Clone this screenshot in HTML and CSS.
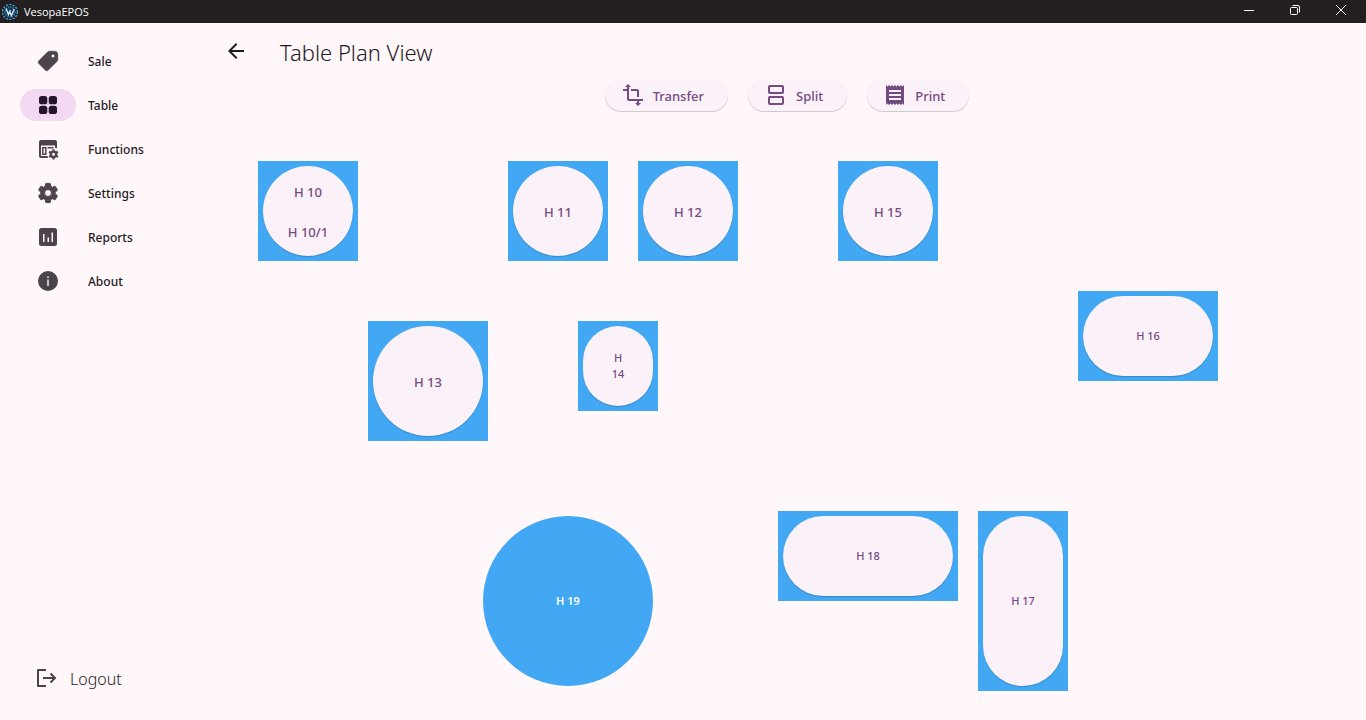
FILE: index.html
```html
<!DOCTYPE html>
<html lang="en">
<head>
<meta charset="utf-8">
<meta name="viewport" content="width=device-width, initial-scale=1">
<title>VesopaEPOS</title>
<link rel="stylesheet" href="styles.css">
</head>
<body>
<header class="titlebar">
  <svg class="logo" viewBox="0 0 18 18" aria-hidden="true">
    <circle cx="9" cy="9" r="7.4" fill="none" stroke="#3fa9dc" stroke-width="1.300" stroke-dasharray="2 1.400"/>
    <circle cx="9" cy="9" r="5" fill="#123a5c" stroke="#2583bd" stroke-width="1.600" stroke-dasharray="1.300 1"/>
    <path d="M5 5.500l2.500 6L9.300 7M8.500 8l1.800 4.500 3-6.500" fill="none" stroke="#e4f6ff" stroke-width="1.300"/>
  </svg>
  <span class="app-name">VesopaEPOS</span>
  <div class="window-controls">
    <button class="window-button" aria-label="Minimize"><svg viewBox="0 0 12 12"><path d="M1 6.500h10"/></svg></button>
    <button class="window-button" aria-label="Restore"><svg viewBox="0 0 12 12"><rect x="1.500" y="3.500" width="7" height="7" rx="1"/><path d="M3.500 1.500H9A1.500 1.500 0 0 1 10.500 3V8.500"/></svg></button>
    <button class="window-button" aria-label="Close"><svg viewBox="0 0 12 12"><path d="M1 1l10 10M11 1L1 11"/></svg></button>
  </div>
</header>
<div class="shell">
  <nav class="sidebar">
    <ul class="nav-list">
      <li><a class="nav-item" href="#sale"><span class="indicator"><svg class="icon" viewBox="0 0 24 24"><path stroke="currentColor" stroke-width=".6" stroke-linejoin="round" transform="matrix(-1 0 0 1 24 0)" d="M21.200 11.800 12.200 2.800C11.800 2.400 11.200 2.200 10.700 2.200H5.200C3.500 2.200 2.200 3.500 2.200 5.200V10.700C2.200 11.200 2.400 11.800 2.800 12.200L11.800 21.200C12.600 22 13.800 22 14.600 21.200L21.200 14.600C22 13.800 22 12.600 21.200 11.800zM7 8.700C6 8.700 5.300 8 5.300 7S6 5.300 7 5.300 8.700 6 8.700 7 8 8.700 7 8.700z"/></svg></span><span class="label">Sale</span></a></li>
      <li><a class="nav-item selected" href="#table" aria-current="page"><span class="indicator"><svg class="icon" viewBox="0 0 24 24"><rect x="3" y="3" width="8.300" height="8.300" rx="2.600"/><rect x="12.700" y="3" width="8.300" height="8.300" rx="2.600"/><rect x="3" y="12.700" width="8.300" height="8.300" rx="2.600"/><rect x="12.700" y="12.700" width="8.300" height="8.300" rx="2.600"/></svg></span><span class="label">Table</span></a></li>
      <li><a class="nav-item" href="#functions"><span class="indicator"><svg class="icon" viewBox="0 0 24 24"><path fill-rule="evenodd" d="M5 3h14a2 2 0 0 1 2 2v6.500a6.500 6.500 0 0 0-2-.8V8.500H5V19h6.500a6.500 6.500 0 0 0 .8 2H5a2 2 0 0 1-2-2V5a2 2 0 0 1 2-2z"/><path fill="none" stroke="currentColor" stroke-width="1.500" d="M6.800 10.800h3v6.500h-3zM11.500 10.800h6"/><circle cx="17.500" cy="17.300" r="2.700" fill="none" stroke="currentColor" stroke-width="2.400"/><path fill="none" stroke="currentColor" stroke-width="2.200" d="M17.500 14.600v-2.400M17.500 20v2.400M15.160 15.950l-2.080-1.200M19.840 18.650l2.080 1.200M15.160 18.650l-2.080 1.200M19.840 15.950l2.080-1.200"/></svg></span><span class="label">Functions</span></a></li>
      <li><a class="nav-item" href="#settings"><span class="indicator"><svg class="icon" viewBox="0 0 24 24"><path fill-rule="evenodd" stroke="currentColor" stroke-width="1" stroke-linejoin="round" d="M19.140 12.940c.04-.3.06-.61.06-.94s-.02-.64-.07-.94l2.030-1.580a.49.49 0 0 0 .12-.61l-1.920-3.320a.49.49 0 0 0-.59-.22l-2.390.96a7 7 0 0 0-1.620-.94l-.36-2.540A.48.48 0 0 0 13.920 2.400h-3.840a.47.47 0 0 0-.47.41l-.36 2.540c-.59.24-1.130.57-1.620.94l-2.390-.96a.48.48 0 0 0-.59.22L2.740 8.870a.47.47 0 0 0 .12.61l2.030 1.580c-.05.3-.09.63-.09.94s.02.64.07.94l-2.030 1.580a.49.49 0 0 0-.12.61l1.920 3.320c.12.22.37.29.59.22l2.390-.96c.5.38 1.030.7 1.620.94l.36 2.540c.05.24.24.41.48.41h3.840c.24 0 .44-.17.47-.41l.36-2.540a7 7 0 0 0 1.620-.94l2.390.96c.22.08.47 0 .59-.22l1.920-3.320a.47.47 0 0 0-.12-.61zM12 15.500a3.500 3.500 0 1 1 0-7 3.500 3.500 0 0 1 0 7z"/></svg></span><span class="label">Settings</span></a></li>
      <li><a class="nav-item" href="#reports"><span class="indicator"><svg class="icon" viewBox="0 0 24 24"><path d="M18.500 3h-13A2.500 2.500 0 0 0 3 5.500v13A2.500 2.500 0 0 0 5.500 21h13a2.500 2.500 0 0 0 2.500-2.500v-13A2.500 2.500 0 0 0 18.500 3zM8.500 17H7V9h1.500zm4.500 0h-1.500v-4.500H13zm4 0h-1.500V7.500H17z"/></svg></span><span class="label">Reports</span></a></li>
      <li><a class="nav-item" href="#about"><span class="indicator"><svg class="icon" viewBox="0 0 24 24"><path d="M12 2a10 10 0 1 0 0 20 10 10 0 0 0 0-20zm.7 15h-1.400v-6.500h1.400zm0-8h-1.400V7.400h1.400z"/></svg></span><span class="label">About</span></a></li>
    </ul>
    <a class="logout" href="#logout"><svg class="icon" viewBox="0 0 24 24"><path fill="none" stroke="currentColor" stroke-width="2" stroke-linejoin="round" d="M12 4H4v16h8"/><path fill="none" stroke="currentColor" stroke-width="2" d="M9 12h12M16.500 7.500 21 12l-4.500 4.500"/></svg><span class="label">Logout</span></a>
  </nav>
  <main class="content">
    <div class="appbar">
      <button class="back" aria-label="Back"><svg class="icon" viewBox="0 0 24 24"><path d="M20 11H7.830l5.590-5.590L12 4l-8 8 8 8 1.410-1.410L7.830 13H20z"/></svg></button>
      <h1 class="title">Table Plan View</h1>
    </div>
    <div class="actions">
      <button class="action"><svg class="icon" viewBox="0 0 24 24"><path d="M22 18v-2H8V4h2L7 1 4 4h2v2H2v2h4v8c0 1.100.9 2 2 2h8v2h-2l3 3 3-3h-2v-2h4zM10 8h6v6h2V8c0-1.100-.9-2-2-2h-6v2z"/></svg><span class="label">Transfer</span></button>
      <button class="action"><svg class="icon" viewBox="0 0 24 24"><path fill="none" stroke="currentColor" stroke-width="2" d="M6 3h12a1 1 0 0 1 1 1v5a1 1 0 0 1-1 1H6a1 1 0 0 1-1-1V4a1 1 0 0 1 1-1zM6 14h12a1 1 0 0 1 1 1v5a1 1 0 0 1-1 1H6a1 1 0 0 1-1-1v-5a1 1 0 0 1 1-1z"/></svg><span class="label">Split</span></button>
      <button class="action"><svg class="icon" viewBox="0 0 24 24"><path d="M18 17H6v-2h12v2zm0-4H6v-2h12v2zm0-4H6V7h12v2zM3 22l1.500-1.500L6 22l1.500-1.500L9 22l1.500-1.500L12 22l1.500-1.500L15 22l1.500-1.500L18 22l1.500-1.500L21 22V2l-1.500 1.500L18 2l-1.500 1.500L15 2l-1.500 1.500L12 2l-1.500 1.500L9 2 7.500 3.500 6 2 4.500 3.500 3 2v20z"/></svg><span class="label">Print</span></button>
    </div>
    <div class="plan">
      <div class="table h10"><button class="seat"><span>H 10</span><span>H 10/1</span></button></div>
      <div class="table h11"><button class="seat">H 11</button></div>
      <div class="table h12"><button class="seat">H 12</button></div>
      <div class="table h15"><button class="seat">H 15</button></div>
      <div class="table small h16"><button class="seat">H 16</button></div>
      <div class="table h13"><button class="seat">H 13</button></div>
      <div class="table small h14"><button class="seat"><span>H</span><span>14</span></button></div>
      <div class="table small occupied h19"><button class="seat">H 19</button></div>
      <div class="table small h18"><button class="seat">H 18</button></div>
      <div class="table small h17"><button class="seat">H 17</button></div>
    </div>
  </main>
</div>
</body>
</html>
```
FILE: styles.css
```css
* {
  box-sizing: border-box;
}

body {
  margin: 0;
  min-height: 100vh;
  display: flex;
  flex-direction: column;
  background: #fff7fa;
  color: #1f1a1f;
  font-family: "Noto Sans", "Open Sans", sans-serif;
}

button {
  margin: 0;
  padding: 0;
  border: 0;
  background: none;
  color: inherit;
  font: inherit;
  cursor: pointer;
}

a {
  color: inherit;
  text-decoration: none;
}

.icon {
  width: 24px;
  height: 24px;
  flex: none;
  fill: currentColor;
}

.label {
  padding-top: 2px;
}

.titlebar {
  display: flex;
  align-items: center;
  height: 23px;
  padding-left: 1px;
  gap: 5px;
  background: #231f20;
  color: #fff;
}

.logo {
  width: 18px;
  height: 18px;
}

.app-name {
  font-family: "Open Sans", sans-serif;
  font-size: 11px;
  line-height: 16px;
}

.window-controls {
  display: flex;
  align-self: stretch;
  margin-left: auto;
  padding-right: 2px;
}

.window-button {
  display: flex;
  align-items: center;
  justify-content: center;
  width: 46px;
  padding-bottom: 3px;
}

.window-button svg {
  width: 12px;
  height: 12px;
  fill: none;
  stroke: #fff;
}

.shell {
  flex: 1;
  display: flex;
}

.sidebar {
  flex: none;
  width: 208px;
  display: flex;
  flex-direction: column;
  justify-content: space-between;
  padding: 22px 20px 28px;
}

.nav-list {
  display: flex;
  flex-direction: column;
  gap: 12px;
  margin: 0;
  padding: 0;
  list-style: none;
}

.nav-item {
  display: flex;
  align-items: center;
  gap: 12px;
  font-size: 12px;
  font-weight: 500;
  line-height: 16px;
}

.indicator {
  display: flex;
  align-items: center;
  justify-content: center;
  width: 56px;
  height: 32px;
  border-radius: 16px;
  color: #4c444d;
}

.selected .indicator {
  background: #f3daf2;
  color: #25152a;
}

.logout {
  display: flex;
  align-items: center;
  gap: 12px;
  padding-left: 14px;
  font-size: 16px;
  font-weight: 300;
  line-height: 26px;
}

.logout .icon {
  color: #4c444d;
}

.content {
  flex: 1;
  min-width: 0;
  display: flex;
  flex-direction: column;
}

.appbar {
  display: flex;
  align-items: center;
  gap: 16px;
  height: 56px;
}

.back {
  display: flex;
  align-items: center;
  justify-content: center;
  width: 56px;
  height: 56px;
}

.title {
  margin: 0;
  padding-top: 2px;
  font-size: 22px;
  font-weight: 300;
  line-height: 28px;
}

.actions {
  display: flex;
  justify-content: center;
  gap: 20px;
}

.action {
  display: flex;
  align-items: center;
  gap: 8px;
  height: 32px;
  padding: 0 24px 0 16px;
  border-radius: 16px;
  background: #fbf1f9;
  box-shadow: 0 1px 1px rgba(0, 0, 0, 0.2);
  color: #744b81;
  font-size: 13px;
  font-weight: 500;
}

.plan {
  flex: 1;
  position: relative;
  min-height: 599px;
  margin-top: 10px;
}

.table {
  position: absolute;
  padding: 5px;
  background: #42a8f4;
  color: #744b81;
  font-size: 13px;
  font-weight: 500;
}

.seat {
  display: flex;
  flex-direction: column;
  align-items: center;
  justify-content: center;
  width: 100%;
  height: 100%;
  padding-top: 2px;
  border-radius: 40px;
  background: #fbf1f9;
  box-shadow: 0 1px 1px rgba(0, 0, 0, 0.2);
  line-height: 20px;
}

.small {
  font-size: 11px;
}

.small .seat {
  padding-top: 0;
  line-height: 16px;
}

.occupied {
  background: none;
  color: #fff;
  font-weight: 600;
}

.occupied .seat {
  border-radius: 50%;
  background: #42a8f4;
  box-shadow: none;
}

.h10, .h11, .h12, .h15 {
  top: 40px;
  width: 100px;
  height: 100px;
}

.h10 .seat, .h11 .seat, .h12 .seat, .h13 .seat, .h15 .seat {
  border-radius: 50%;
}

.h10 .seat {
  gap: 20px;
}

.h10 { left: 50px; }
.h11 { left: 300px; }
.h12 { left: 430px; }
.h15 { left: 630px; }
.h16 { left: 870px; top: 170px; width: 140px; height: 90px; }
.h13 { left: 160px; top: 200px; width: 120px; height: 120px; }
.h14 { left: 370px; top: 200px; width: 80px; height: 90px; }
.h19 { left: 270px; top: 390px; width: 180px; height: 180px; }
.h18 { left: 570px; top: 390px; width: 180px; height: 90px; }
.h17 { left: 770px; top: 390px; width: 90px; height: 180px; }
```
